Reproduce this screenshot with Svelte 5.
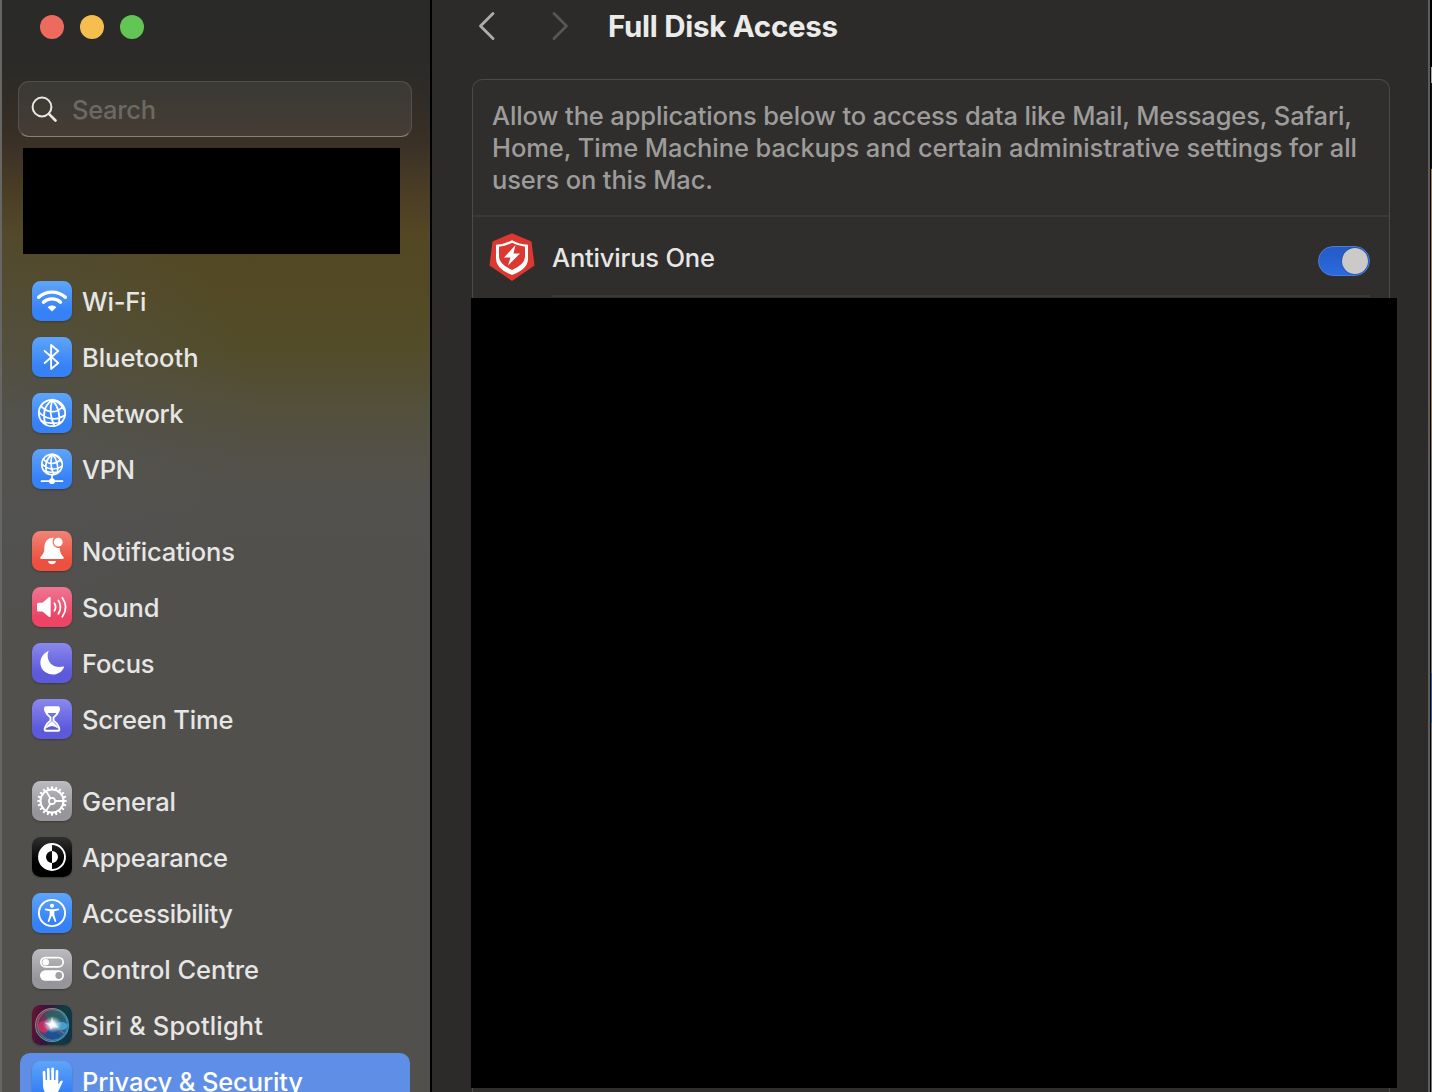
<script>
  const groups = [
    [
      { id: 'wifi', label: 'Wi-Fi', tint: 'blue', w: 64.5 },
      { id: 'bluetooth', label: 'Bluetooth', tint: 'blue', w: 116.5 },
      { id: 'network', label: 'Network', tint: 'blue', w: 101.5 },
      { id: 'vpn', label: 'VPN', tint: 'blue', w: 53 }
    ],
    [
      { id: 'bell', label: 'Notifications', tint: 'red', w: 153 },
      { id: 'sound', label: 'Sound', tint: 'pink', w: 77.5 },
      { id: 'focus', label: 'Focus', tint: 'indigo', w: 72.5 },
      { id: 'hourglass', label: 'Screen Time', tint: 'indigo', w: 151.5 }
    ],
    [
      { id: 'gear', label: 'General', tint: 'gray', w: 94 },
      { id: 'appearance', label: 'Appearance', tint: 'black', w: 146 },
      { id: 'access', label: 'Accessibility', tint: 'blue', w: 151 },
      { id: 'control', label: 'Control Centre', tint: 'gray', w: 177 },
      { id: 'siri', label: 'Siri & Spotlight', tint: 'siri', w: 181 },
      { id: 'hand', label: 'Privacy & Security', tint: 'blue', w: 221, selected: true }
    ]
  ];
  const teeth = Array.from({ length: 20 }, (_, i) => i * 18);
</script>

{#snippet globe()}
  <circle cx="20" cy="20" r="13.2" />
  <path d="M20.5 6.8C13 12 10 20 13.5 31.5M20.5 6.8C17.5 15 18 24 22.5 33M20.5 6.8C25 12 28.5 21 27 31.2M20.5 6.8C26 8.5 30 12 32 16.5M9 13.2C15 20 24 21 31 13.5M6.9 19C13 26 24 28.5 33 22M9.5 28C16 30.5 23 31 29.5 29" />
{/snippet}

<div class="window">
  <aside class="sidebar">
    <div class="lights"><i class="close"></i><i class="mini"></i><i class="zoom"></i></div>
    <div class="search">
      <svg width="28" height="28" viewBox="0 0 28 28"><circle cx="12" cy="12" r="9.4" /><path d="M18.9 18.9L25.5 25.5" class="handle" /></svg>
      <span>Search</span>
    </div>
    <div class="account"></div>
    <nav>
      {#each groups as group}
        <ul>
          {#each group as item}
            <li class:selected={item.selected}>
              <svg class="icon {item.tint}" width="40" height="40" viewBox="0 0 40 40">
                {#if item.id === 'wifi'}
                  <g class="line" stroke-width="3.3"><path d="M6.6 16.3C14 9.3 26 9.3 33.4 16.3" /><path d="M11.4 21.2C16 16.8 24 16.8 28.6 21.2" /></g>
                  <path class="fill" d="M15.6 26.2C18 24 22 24 24.4 26.2L20 30.6Z" />
                {:else if item.id === 'bluetooth'}
                  <path class="line" stroke-width="1.9" d="M12.7 14L26.3 26L19.1 32V8L26.3 14L12.7 26" />
                {:else if item.id === 'network'}
                  <g class="line" stroke-width="1.8">{@render globe()}</g>
                {:else if item.id === 'vpn'}
                  <g class="line" stroke-width="2.1" transform="translate(4.4 -.1) scale(.78)">{@render globe()}</g>
                  <path class="line" stroke-width="1.7" d="M20 26V32M9.5 32.2H30.5" /><circle class="fill" cx="20" cy="32.2" r="2.9" />
                {:else if item.id === 'bell'}
                  <path class="fill" d="M20.8 6.8C15.5 7 12.6 11 12.4 16C12.3 22 11 23 8.7 25.8C7.8 27 8.2 28 9.5 28H30.5C31.8 28 32.2 27 31.3 25.8C29 23 27.9 21.5 27.7 17C22.5 17.5 18.5 12 21.8 6.9Z" />
                  <circle class="fill" cx="26.2" cy="11.2" r="4.4" /><path class="fill" d="M15.9 29.9H24.1C23 34.2 17 34.2 15.9 29.9Z" />
                {:else if item.id === 'sound'}
                  <path class="fill" d="M6.5 15.7H10.5L16.8 10.3C17.7 9.6 18.7 10 18.7 11V29C18.7 30 17.7 30.3 16.8 29.7L10.5 24.5H6.5Q5 24.5 5 23V17.2Q5 15.7 6.5 15.7Z" />
                  <path class="line" stroke-width="1.8" d="M22.4 16.2Q24.7 20 22.4 23.8M26.4 13.5Q30.5 20 26.4 26.7M30.3 10.7Q37 20 30.3 29.7" />
                {:else if item.id === 'focus'}
                  <path class="fill" d="M16.6 8C13.5 15 18 26.5 31 23.5C32 23.2 32.2 24 31.8 24.7C28.6 31.5 20 33.4 13.9 29.6C6 24.6 6.7 12.7 15.3 8.4C16 8 16.8 7.5 16.6 8Z" />
                {:else if item.id === 'hourglass'}
                  <path class="line" stroke-width="1.9" d="M14 8.3H26C28.5 8.3 26.5 15 21.5 18.5V21.5C26.5 25 28.8 31.7 26.3 31.7H13.7C11.2 31.7 13.5 25 18.5 21.5V18.5C13.5 15 11.5 8.3 14 8.3Z" />
                  <path class="fill" d="M13 8H27V12L25.5 14H14.5L13 12ZM20 22C23 25 26 27 26 29.5Q20 24.5 14 29.5C14 27 17 25 20 22Z" />
                {:else if item.id === 'gear'}
                  <circle class="line" cx="20" cy="20" r="11.5" stroke-width="2" /><circle class="line" cx="20" cy="20" r="3.1" stroke-width="1.6" />
                  {#each teeth as angle}<path class="fill" d="M18.7 8.5L19.2 5.2H20.8L21.3 8.5Z" transform="rotate({angle} 20 20)" />{/each}
                  <path class="line" stroke-width="1.8" d="M23.2 20H31.5M18.4 17.2L14 9.9M18.4 22.8L14 30.1" />
                {:else if item.id === 'appearance'}
                  <circle class="line" cx="20" cy="20" r="13" stroke-width="1.9" /><path class="fill" d="M20 7A13 13 0 0 0 20 33V26A6 6 0 0 1 20 14ZM20 14A6 6 0 0 1 20 26Z" />
                {:else if item.id === 'access'}
                  <circle class="line" cx="20" cy="20" r="13.1" stroke-width="1.9" /><circle class="fill" cx="20" cy="12.8" r="2.1" />
                  <path class="fill" d="M13.4 15.5L18.5 16.3H21.5L26.6 15.5Q27.9 16.4 26.6 17.2L22.3 18.3V21.7L24.3 28.3Q23.8 29.6 22.8 28.7L20.3 22.9H19.7L17.2 28.7Q16.2 29.6 15.7 28.3L17.7 21.7V18.3L13.4 17.2Q12.1 16.4 13.4 15.5Z" />
                {:else if item.id === 'control'}
                  <rect class="line" x="8.8" y="8.6" width="22.4" height="9.2" rx="4.6" stroke-width="1.7" /><circle class="fill" cx="13.7" cy="13.2" r="3.3" />
                  <rect class="fill" x="8" y="21.3" width="24" height="10.4" rx="5.2" /><circle class="knob-gray" cx="26.8" cy="26.5" r="3.4" />
                {:else if item.id === 'siri'}
                  <defs>
                    <radialGradient id="glow"><stop offset="0" stop-color="#fff" /><stop offset=".3" stop-color="#f2fcff" stop-opacity=".9" /><stop offset="1" stop-color="#a9dcea" stop-opacity="0" /></radialGradient>
                    <linearGradient id="orb" x1="0" y1=".3" x2="1" y2=".7"><stop offset="0" stop-color="#a81e55" /><stop offset=".45" stop-color="#59668a" /><stop offset="1" stop-color="#1d75ba" /></linearGradient>
                    <linearGradient id="ring" x1="0" y1="0" x2="1" y2="1"><stop offset="0" stop-color="#b77a7c" /><stop offset=".45" stop-color="#4f9b86" /><stop offset="1" stop-color="#4b9bd8" /></linearGradient>
                  </defs>
                  <circle cx="20" cy="20" r="16" fill="url(#orb)" opacity=".7" /><path d="M12 10Q20 1 32 14L20 18Z" fill="#1f6855" opacity=".7" />
                  <ellipse cx="12.5" cy="21.5" rx="6.5" ry="6" fill="#d82f66" opacity=".75" /><ellipse cx="29.5" cy="21" rx="6" ry="4" fill="#4fb6e2" opacity=".75" />
                  <path d="M12 31Q18 23 20 20Q24 29 30 31Q21 37 12 31" fill="#174f9a" opacity=".8" /><path d="M22 22L32 28" stroke="#d8638b" stroke-width="1.2" opacity=".7" />
                  <ellipse cx="20.5" cy="19.5" rx="9.5" ry="8.5" fill="url(#glow)" /><path d="M20 11.5L22 18L27 22.5L21 22L18.500 25L17.500 21L12 17.5L18.5 18.5Z" fill="#fff" opacity=".65" />
                  <circle cx="20" cy="20" r="16.5" fill="none" stroke="url(#ring)" stroke-width="1.1" /><ellipse cx="20.5" cy="20" rx="15" ry="15.5" fill="none" stroke="url(#ring)" stroke-width=".7" />
                {:else}
                  <path class="line" stroke-width="2.7" d="M12.4 20.5L12 11.2M16.5 20L16.2 8.3M20.6 20V7.8M24.8 21L25 10.4" />
                  <path class="fill" d="M11 19H26.2V23.5L28.3 20.2Q30.2 18.6 30.9 20.5L27 29Q24.5 34 19.5 34Q11.5 34 11 25Z" />
                {/if}
              </svg>
              <svg class="label" width={item.w + 4} height="40"><text x="0" y="30.2" textLength={item.w} lengthAdjust="spacing">{item.label}</text></svg>
            </li>
          {/each}
        </ul>
      {/each}
    </nav>
  </aside>
  <main>
    <header>
      <svg class="chev" width="20" height="32" viewBox="0 0 20 32"><path d="M16 3.5L3.5 16L16 28.5" /></svg>
      <svg class="chev dim" width="20" height="32" viewBox="0 0 20 32"><path d="M3 3.5L15.5 16L3 28.5" /></svg>
      <svg class="title" width="236" height="40"><text x="0" y="30" textLength="230">Full Disk Access</text></svg>
    </header>
    <section class="panel">
      <svg class="intro" width="880" height="135">
        <text x="0" y="45" textLength="860">Allow the applications below to access data like Mail, Messages, Safari,</text>
        <text x="0" y="77" textLength="865">Home, Time Machine backups and certain administrative settings for all</text>
        <text x="0" y="109" textLength="221">users on this Mac.</text>
      </svg>
      <div class="app">
        <svg class="shield" width="46" height="50" viewBox="0 0 46 50">
          <path d="M23 1.2L42.5 9.5L45.5 33.5L23 49L.5 33.5L3.5 9.5Z" fill="#dc3832" />
          <path d="M23 8.3Q30 12.3 39 12.8V27Q39 37 23 43Q7 37 7 27V12.8Q16 12.3 23 8.3Z" fill="#fff" />
          <path d="M23 10.8Q29 14 36 14.8V25Q35.5 32.5 23 38Q10.5 32.5 10 25V14.8Q17 14 23 10.8Z" fill="#dc3832" />
          <path d="M26.5 13L15 25.5H21.5L19 33.5L31 21.5H24.5Z" fill="#fff" />
        </svg>
        <div class="row">
          <svg class="name" width="166" height="40"><text x="0" y="30.2" textLength="163">Antivirus One</text></svg>
          <div class="toggle"><i></i></div>
        </div>
      </div>
    </section>
    <div class="redacted"></div>
    <div class="tail"></div>
  </main>
  <div class="edge"></div>
  <div class="desktop"></div>
</div>

<style>
  :global(body) { overflow: hidden; background: #000; }
  .window { display: flex; width: 1432px; height: 1092px; overflow: hidden; font-family: Inter, "Liberation Sans", sans-serif; }
  .sidebar {
    box-sizing: border-box; width: 432px; height: 1092px; flex: none; overflow: hidden;
    border-left: 2px solid #666664; border-right: 2px solid #000; padding: 15px 18px 0 16px;
    background:
      radial-gradient(ellipse 260px 240px at 0 430px, rgba(82, 82, 82, .75), transparent),
      linear-gradient(#2a2a29 0, #2b2a28 60px, #302c27 100px, #3b3126 145px, #4a3d25 190px, #534724 235px, #534a25 290px, #534c29 350px, #53503c 410px, #535148 460px, #52514e 510px, #51504d 560px, #51504d 100%);
  }
  .lights { display: flex; gap: 16px; padding-left: 22px; height: 24px; }
  .lights i { width: 24px; height: 24px; border-radius: 50%; }
  .close { background: #ed6a5e; }
  .mini { background: #f5be4f; }
  .zoom { background: #62c655; }
  .search {
    box-sizing: border-box; display: flex; align-items: center; width: 394px; height: 56px; margin-top: 42px;
    padding-left: 11px; gap: 14px; border: 1px solid rgba(255, 255, 255, .11); border-bottom-color: rgba(255, 255, 255, .35);
    border-radius: 11px; background: rgba(255, 255, 255, .065);
  }
  .search svg { fill: none; stroke: #e8e8e7; stroke-width: 2; stroke-linecap: round; }
  .search .handle { stroke-width: 2.7; }
  .search span { font-size: 25.5px; font-weight: 450; letter-spacing: -.3px; color: #6c6963; }
  .account { width: 377px; height: 106px; margin: 11.4px 0 0 4.6px; background: #000; }
  nav { padding-top: 18.6px; }
  ul { list-style: none; margin: 0 0 26px; padding: 0; }
  li { box-sizing: border-box; display: flex; align-items: center; gap: 10px; width: 390px; height: 56px; margin-left: 2px; padding-left: 12px; }
  .selected { border-radius: 10px; background: #5f8ee6; }
  .icon { flex: none; border-radius: 8.5px; box-shadow: 0 1px 2px rgba(0, 0, 0, .28); }
  .fill { fill: #fff; }
  .line { fill: none; stroke: #fff; stroke-linecap: round; stroke-linejoin: round; }
  .knob-gray { fill: #a09fa4; }
  .blue { background: linear-gradient(#5ea5f8, #3781f7 75%); }
  .red { background: linear-gradient(#f08478, #ec5140 75%); }
  .pink { background: linear-gradient(#ef7693, #ec4464 75%); }
  .indigo { background: linear-gradient(#8a89ee, #5c5adb 75%); }
  .gray { background: linear-gradient(#bcbbc0, #96959a 75%); }
  .black { background: linear-gradient(#303030, #000 60%); }
  .siri { background: linear-gradient(100deg, #6b1230, #351440 35%, #123c42 70%, #123047); }
  text { font-size: 25.5px; font-weight: 450; fill: #e6e6e5; }
  .selected text { fill: #fff; }
  main { width: 996px; flex: none; background: #2c2b29; }
  header { display: flex; height: 79px; align-items: flex-start; }
  .chev { margin: 10px 0 0 45px; fill: none; stroke: #acacab; stroke-width: 2.9; stroke-linecap: round; stroke-linejoin: round; }
  .dim { margin-left: 53.5px; stroke: #575654; }
  .title { margin: 7px 0 0 37.5px; }
  .title text { font-size: 29.5px; font-weight: 700; fill: #ebebea; }
  .panel { box-sizing: border-box; width: 918px; height: 219px; margin-left: 40px; border: 1px solid #4b4a48; border-bottom: 0; border-radius: 10px 10px 0 0; background: #2f2e2c; }
  .intro { display: block; padding-left: 19px; }
  .intro text { fill: #9d9c9b; }
  .app { display: flex; height: 83px; align-items: flex-start; border-top: 2px solid #3a3937; box-sizing: border-box; }
  .shield { flex: none; margin: 15px 17px 0 16px; }
  .row { box-sizing: border-box; display: flex; flex: 1; align-items: flex-start; height: 80px; margin-right: 19px; border-bottom: 2px solid #3a3937; }
  .name { margin: 20px 0 0; }
  .toggle { box-sizing: border-box; display: flex; justify-content: flex-end; width: 52px; height: 30px; margin: 29px 0 0 auto; padding: 1px 1px 0 0; border: 1px solid #4a7ddb; border-radius: 15px; background: linear-gradient(#245bc5, #2b6ae0); }
  .toggle i { width: 26px; height: 26px; border-radius: 50%; background: #cbcac9; box-shadow: 0 0 2px rgba(0, 0, 0, .4); }
  .redacted { width: 926px; height: 790px; margin-left: 39px; background: #000; }
  .tail { box-sizing: border-box; width: 918px; height: 4px; margin-left: 40px; border: 1px solid #4b4a48; border-width: 0 1px; background: #2f2e2c; }
  .edge { width: 2px; background: #5d5c5b; border-right: 1px solid #000; }
  .desktop { width: 1px; background: linear-gradient(#000 67px, #aaa 67px 83px, #111 83px 169px, #a08335 169px 400px, #777 480px 673px, #2865b5 673px 723px, #777 723px); }
</style>
